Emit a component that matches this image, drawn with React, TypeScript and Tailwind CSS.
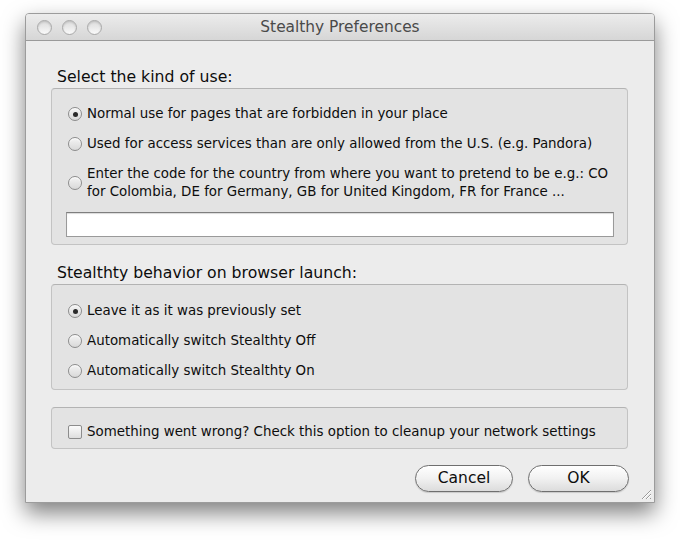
import { ReactNode } from 'react'

const font = { fontFamily: '"DejaVu Sans", "Liberation Sans", sans-serif' }

const Radio = ({ checked }: { checked?: boolean }) => (
  <span className="flex h-[14px] w-[14px] shrink-0 items-center justify-center rounded-full border border-[#8c8c8c] bg-gradient-to-b from-[#f4f4f4] to-[#d9d9d9] shadow-[inset_0_1px_1px_rgba(255,255,255,0.9)]">
    {checked && <span className="h-[5px] w-[5px] rounded-full bg-[#2a2a2a]" />}
  </span>
)

const Option = ({ checked, children }: { checked?: boolean; children: ReactNode }) => (
  <div className="flex h-[20px] items-center gap-[5px] pl-[16px]">
    <Radio checked={checked} />
    <span className="whitespace-nowrap text-[13.4px] leading-[18px] text-[#0d0d0d]">{children}</span>
  </div>
)

const Box = ({ className, children }: { className: string; children: ReactNode }) => (
  <div
    className={`rounded-[4px] border border-[#c3c3c3] border-t-[#b3b3b3] bg-[#e3e3e3] ${className}`}
  >
    {children}
  </div>
)

const Light = () => (
  <span className="h-[15px] w-[15px] rounded-full border border-[#a9a9a9] bg-gradient-to-b from-[#dcdcdc] via-[#eaeaea] to-[#fafafa] shadow-[inset_0_1px_2px_rgba(0,0,0,0.15)]" />
)

const Button = ({ label, w }: { label: string; w: string }) => (
  <button
    className={`flex h-[27px] ${w} items-center justify-center rounded-full border border-[#6f6f6f] bg-gradient-to-b from-[#ffffff] via-[#f1f1f1] to-[#dcdcdc] text-[15.5px] text-[#0d0d0d] shadow-[0_1px_1px_rgba(0,0,0,0.15)]`}
  >
    {label}
  </button>
)

export default function App() {
  return (
    <div className="h-[541px] w-[680px] bg-white pl-[25px] pt-[13px]" style={font}>
      <div className="flex h-[490px] w-[630px] flex-col overflow-hidden rounded-t-[4px] border border-[#9c9c9c] bg-[#ececec] shadow-[0_10px_22px_rgba(0,0,0,0.5)]">
        {/* title bar */}
        <div className="relative flex h-[27px] shrink-0 items-center border-b border-[#9a9a9a] bg-gradient-to-b from-[#ececec] to-[#d6d6d6] pl-[11px]">
          <div className="flex gap-[10px]">
            <Light />
            <Light />
            <Light />
          </div>
          <div className="absolute inset-0 flex items-center justify-center pt-[1px] text-[15.4px] text-[#4a4a4a]">
            Stealthy Preferences
          </div>
        </div>

        {/* body */}
        <div className="relative flex flex-1 flex-col pl-[25px] pr-[25px] pt-[27px]">
          <div className="mb-[2px] h-[18px] whitespace-nowrap pl-[6px] text-[15.7px] leading-[18px] text-[#0d0d0d]">
            Select the kind of use:
          </div>
          <Box className="mr-[1px] h-[157px] pt-[15px]">
            <Option checked>Normal use for pages that are forbidden in your place</Option>
            <div className="mt-[10px]">
              <Option>Used for access services than are only allowed from the U.S. (e.g. Pandora)</Option>
            </div>
            <div className="mt-[11px] flex items-center gap-[5px] pl-[16px]">
              <Radio />
              <span className="whitespace-nowrap text-[13.4px] leading-[18px] text-[#0d0d0d]">
                Enter the code for the country from where you want to pretend to be e.g.: CO
                <br />
                for Colombia, DE for Germany, GB for United Kingdom, FR for France ...
              </span>
            </div>
            <div className="ml-[14px] mr-[13px] mt-[11px] h-[25px] border border-[#9a9a9a] border-t-[#7e7e7e] bg-white shadow-[inset_0_1px_1px_rgba(0,0,0,0.15)]" />
          </Box>

          <div className="mb-[2px] mt-[19px] h-[18px] whitespace-nowrap pl-[6px] text-[15.7px] leading-[18px] text-[#0d0d0d]">
            Stealthty behavior on browser launch:
          </div>
          <Box className="mr-[1px] h-[106px] pt-[16px]">
            <Option checked>Leave it as it was previously set</Option>
            <div className="mt-[10px]">
              <Option>Automatically switch Stealthty Off</Option>
            </div>
            <div className="mt-[10px]">
              <Option>Automatically switch Stealthty On</Option>
            </div>
          </Box>

          <Box className="mr-[1px] mt-[17px] flex h-[42px] items-center gap-[5px] pl-[16px] pt-[8px]">
            <span className="h-[14px] w-[14px] shrink-0 rounded-[2px] border border-[#8c8c8c] bg-gradient-to-b from-[#fbfbfb] to-[#dedede]" />
            <span className="whitespace-nowrap text-[13.4px] leading-[18px] text-[#0d0d0d]">
              Something went wrong? Check this option to cleanup your network settings
            </span>
          </Box>

          <div className="mt-[16px] flex justify-end gap-[15px]">
            <Button label="Cancel" w="w-[98px]" />
            <Button label="OK" w="w-[101px]" />
          </div>

          {/* resize grip */}
          <svg className="absolute bottom-[2px] right-[2px]" width="13" height="13" viewBox="0 0 13 13">
            <path d="M12 3 L3 12 M12 7 L7 12 M12 11 L11 12" stroke="#9a9a9a" strokeWidth="1" />
            <path d="M12 4 L4 12 M12 8 L8 12" stroke="#fff" strokeWidth="1" />
          </svg>
        </div>
      </div>
    </div>
  )
}
